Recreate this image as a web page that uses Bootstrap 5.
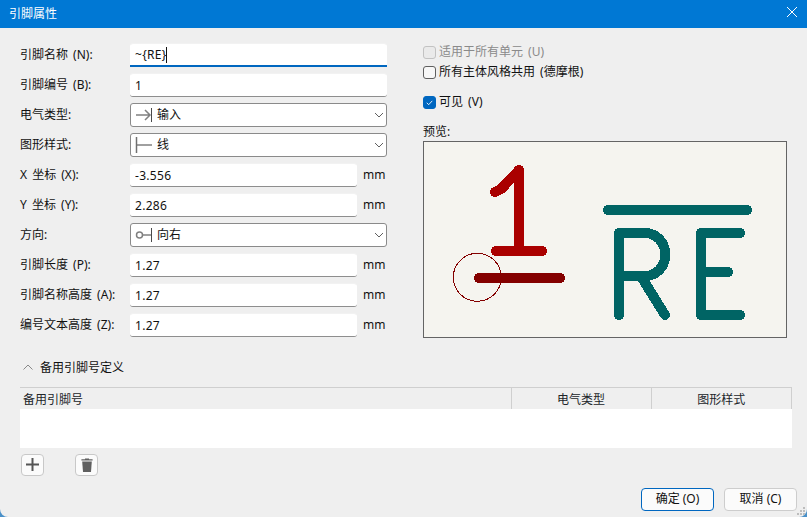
<!DOCTYPE html>
<html lang="zh-CN">
<head>
  <meta charset="UTF-8" />
  <meta name="viewport" content="width=device-width, initial-scale=1" />
  <title>引脚属性</title>
  <link href="https://cdn.jsdelivr.net/npm/bootstrap@5.3.2/dist/css/bootstrap.min.css" rel="stylesheet" />
  <style>
    html, body {
      height: 100%;
      background-color: #4a90c8;
      overflow: hidden;
    }
    body {
      font-family: "Noto Sans", "Noto Sans CJK SC", sans-serif;
      font-size: 12px;
      line-height: 18px;
      word-spacing: 2px;
      color: #111;
    }
    /* Window */
    #dlg {
      position: relative;
      width: 807px;
      height: 517px;
      background-color: #efefef;
      border-radius: 0 0 8px 8px;
      overflow: hidden;
    }
    #titlebar {
      height: 28px;
      padding: 5px 10px 5px 9px;
      background-color: #0078d4;
      color: #fff;
    }
    #closer { width: 10px; height: 10px; margin-top: 2px; }

    /* Top form */
    #formarea { padding: 15px 20px 0; gap: 36px; }
    #leftcol { width: 367px; gap: 6px; }
    #rightcol { width: 364px; }
    .pin-row { height: 24px; }
    .pin-label { width: 110px; flex-shrink: 0; }
    .pin-input.form-control {
      height: 24px;
      min-height: 0;
      padding: 0 4px 0 5px;
      font-size: 12px;
      line-height: 18px;
      letter-spacing: .3px;
      color: #111;
      background-color: #fff;
      border: 0;
      border-top: 1px solid #f2f2f2;
      border-bottom: 1px solid #8e8e8e;
      border-radius: 3px;
      box-shadow: none;
    }
    .pin-input.is-current { border-bottom: 2px solid #0067c0; border-radius: 3px 3px 0 0; }
    .pin-caret {
      position: absolute;
      left: 36px;
      top: 4px;
      width: 1px;
      height: 16px;
      background-color: #111;
    }
    .pin-unit { width: 30px; padding-left: 6px; flex-shrink: 0; }
    .pin-select {
      height: 24px;
      padding: 0 2px 0 4px;
      gap: 2px;
      background-color: #fff;
      border: 1px solid #8a8a8a;
      border-radius: 3px;
    }
    .pin-select svg { flex-shrink: 0; }

    /* Checks */
    .chk-row { height: 18px; gap: 3px; margin-bottom: 2px; }
    .chk-row.chk-gap { margin-top: 12px; margin-bottom: 12px; }
    .chk-row .form-check-input {
      width: 13px;
      height: 13px;
      margin: 0;
      flex-shrink: 0;
      background-color: #f7f7f7;
      border: 1px solid #5f5f5f;
      border-radius: 3px;
      opacity: 1;
    }
    .chk-row .form-check-input:checked {
      background-color: #0067c0;
      border-color: #0067c0;
      background-image: url("data:image/svg+xml,%3csvg xmlns='http://www.w3.org/2000/svg' viewBox='0 0 20 20'%3e%3cpath fill='none' stroke='%23fff' stroke-width='1.6' d='m5 10.5 3.5 3.5 6.5-7'/%3e%3c/svg%3e");
    }
    .chk-row .form-check-input:disabled { background-color: #eaeaea; border-color: #c2c2c2; }
    .chk-off { color: #8a8a8a; }

    #previewbox {
      height: 197px;
      background-color: #f5f4ef;
      border: 1px solid #646464;
    }
    #previewbox svg { display: block; shape-rendering: crispEdges; }

    /* Alternate pins */
    #altarea { padding: 20px 15px 0 20px; }
    #alttoggle { height: 20px; margin-bottom: 9px; padding-left: 3px; gap: 7px; }
    #alttoggle svg { margin-bottom: 2px; }
    #alttable { width: 772px; margin: 0; table-layout: fixed; border-collapse: collapse; }
    #alttable th {
      height: 21px;
      padding: 1px 3px 0;
      font-weight: 400;
      line-height: 18px;
      background-color: #efefef;
      border-top: 1px solid #cfcfcf;
      border-left: 1px solid #cfcfcf;
      border-bottom: 0;
      text-align: center;
    }
    #alttable th:first-child { border-left: 0; text-align: left; }
    #alttable th:last-child { border-right: 1px solid #cfcfcf; }
    #alttable td { height: 39px; padding: 0; background-color: #fff; border: 0; }
    .col-a { width: 491px; }
    .col-b { width: 140px; }

    #alttools { margin: 6px 0 0 1px; gap: 31px; }
    .tool-btn.btn {
      width: 23px;
      height: 22px;
      padding: 0;
      background-color: #fbfbfb;
      border: 1px solid #c8c8c8;
      border-radius: 4px;
    }

    /* Footer */
    #footerbar { margin-top: 12px; padding-right: 10px; gap: 10px; }
    .foot-btn.btn {
      width: 73px;
      height: 23px;
      padding: 0;
      font-size: 12px;
      line-height: 20px;
      color: #111;
      background-color: #fbfbfb;
      border: 1px solid #cdcdcd;
      border-radius: 4px;
    }
    .foot-btn.is-default { border-color: #0067c0; }
    #grip { position: absolute; right: 2px; bottom: 2px; }
  </style>
</head>
<body>
  <div id="dlg">

    <div id="titlebar" class="d-flex justify-content-between align-items-start">
      <span>引脚属性</span>
      <svg id="closer" viewBox="0 0 10 10"><path d="M0 0L10 10M10 0L0 10" stroke="#fff" stroke-width="1" fill="none"/></svg>
    </div>

    <div id="formarea" class="d-flex">
      <div id="leftcol" class="d-flex flex-column">
        <div class="pin-row d-flex align-items-center">
          <span class="pin-label">引脚名称 (N):</span>
          <div class="position-relative flex-grow-1">
            <input class="form-control pin-input is-current" type="text" value="~{RE}" />
            <span class="pin-caret"></span>
          </div>
        </div>
        <div class="pin-row d-flex align-items-center">
          <span class="pin-label">引脚编号 (B):</span>
          <input class="form-control pin-input" type="text" value="1" />
        </div>
        <div class="pin-row d-flex align-items-center">
          <span class="pin-label">电气类型:</span>
          <div class="pin-select flex-grow-1 d-flex align-items-center">
            <svg width="20" height="16" viewBox="0 0 20 16"><path d="M1 8H15M10 3L15 8L10 13" stroke="#808080" stroke-width="1.5" fill="none"/><path d="M16.5 1V15" stroke="#4a4a4a" stroke-width="1"/></svg>
            <span class="flex-grow-1">输入</span>
            <svg width="10" height="6" viewBox="0 0 10 6"><path d="M1 1L5 5L9 1" stroke="#606060" fill="none"/></svg>
          </div>
        </div>
        <div class="pin-row d-flex align-items-center">
          <span class="pin-label">图形样式:</span>
          <div class="pin-select flex-grow-1 d-flex align-items-center">
            <svg width="20" height="16" viewBox="0 0 20 16"><path d="M1.5 8H17" stroke="#808080" stroke-width="1.5" fill="none"/><path d="M1.5 0V16" stroke="#707070" stroke-width="1.5"/></svg>
            <span class="flex-grow-1">线</span>
            <svg width="10" height="6" viewBox="0 0 10 6"><path d="M1 1L5 5L9 1" stroke="#606060" fill="none"/></svg>
          </div>
        </div>
        <div class="pin-row d-flex align-items-center">
          <span class="pin-label">X 坐标 (X):</span>
          <input class="form-control pin-input" type="text" value="-3.556" />
          <span class="pin-unit">mm</span>
        </div>
        <div class="pin-row d-flex align-items-center">
          <span class="pin-label">Y 坐标 (Y):</span>
          <input class="form-control pin-input" type="text" value="2.286" />
          <span class="pin-unit">mm</span>
        </div>
        <div class="pin-row d-flex align-items-center">
          <span class="pin-label">方向:</span>
          <div class="pin-select flex-grow-1 d-flex align-items-center">
            <svg width="20" height="16" viewBox="0 0 20 16"><circle cx="4.5" cy="8" r="3" stroke="#808080" stroke-width="1.5" fill="none"/><path d="M7.5 8H16" stroke="#808080" stroke-width="1.5"/><path d="M16.5 1V15" stroke="#4a4a4a" stroke-width="1"/></svg>
            <span class="flex-grow-1">向右</span>
            <svg width="10" height="6" viewBox="0 0 10 6"><path d="M1 1L5 5L9 1" stroke="#606060" fill="none"/></svg>
          </div>
        </div>
        <div class="pin-row d-flex align-items-center">
          <span class="pin-label">引脚长度 (P):</span>
          <input class="form-control pin-input" type="text" value="1.27" />
          <span class="pin-unit">mm</span>
        </div>
        <div class="pin-row d-flex align-items-center">
          <span class="pin-label">引脚名称高度 (A):</span>
          <input class="form-control pin-input" type="text" value="1.27" />
          <span class="pin-unit">mm</span>
        </div>
        <div class="pin-row d-flex align-items-center">
          <span class="pin-label">编号文本高度 (Z):</span>
          <input class="form-control pin-input" type="text" value="1.27" />
          <span class="pin-unit">mm</span>
        </div>
      </div>

      <div id="rightcol">
        <label class="chk-row d-flex align-items-center chk-off">
          <input class="form-check-input" type="checkbox" disabled />
          <span>适用于所有单元 (U)</span>
        </label>
        <label class="chk-row d-flex align-items-center">
          <input class="form-check-input" type="checkbox" />
          <span>所有主体风格共用 (德摩根)</span>
        </label>
        <label class="chk-row chk-gap d-flex align-items-center">
          <input class="form-check-input" type="checkbox" checked />
          <span>可见 (V)</span>
        </label>
        <div>预览:</div>
        <div id="previewbox">
          <svg width="362" height="195" viewBox="424 142 362 195" fill="none" stroke-linecap="round" stroke-linejoin="round">
            <g stroke="#aa0000" stroke-width="10">
              <path d="M495 192L501 189L505 185L519 170V251"/>
              <path d="M496 251H542"/>
            </g>
            <path d="M479 278H560" stroke="#840000" stroke-width="10"/>
            <circle cx="477.3" cy="277.3" r="24" stroke="#840000" stroke-width="1"/>
            <g stroke="#006464" stroke-width="10">
              <path d="M608 210H747"/>
              <path d="M619 315V233H645C656 233 665 242 665 253V256C665 267 656 276 645 276H619"/>
              <path d="M642 278L665 315"/>
              <path d="M740 233H701V315H740"/>
              <path d="M701 272H728"/>
            </g>
          </svg>
        </div>
      </div>
    </div>

    <div id="altarea">
      <div id="alttoggle" class="d-flex align-items-center">
        <svg width="10" height="6" viewBox="0 0 10 6"><path d="M0.5 5.5L5 1L9.5 5.5" stroke="#888" fill="none"/></svg>
        <span>备用引脚号定义</span>
      </div>
      <table id="alttable" class="table">
        <colgroup><col class="col-a" /><col class="col-b" /><col /></colgroup>
        <thead>
          <tr><th>备用引脚号</th><th>电气类型</th><th>图形样式</th></tr>
        </thead>
        <tbody>
          <tr><td colspan="3"></td></tr>
        </tbody>
      </table>
      <div id="alttools" class="d-flex">
        <button class="btn tool-btn d-flex align-items-center justify-content-center" type="button" aria-label="添加">
          <svg width="13" height="13" viewBox="0 0 13 13"><path d="M6.5 0V13M0 6.5H13" stroke="#555" stroke-width="2"/></svg>
        </button>
        <button class="btn tool-btn d-flex align-items-center justify-content-center" type="button" aria-label="删除">
          <svg width="12" height="14" viewBox="0 0 12 14"><path d="M4 1.2V0.4H8V1.2H11.6V2.6H0.4V1.2Z" fill="#5f5f5f"/><path d="M1.2 3.6H10.8L10 14H2Z" fill="#5f5f5f"/></svg>
        </button>
      </div>
    </div>

    <div id="footerbar" class="d-flex justify-content-end">
      <button class="btn foot-btn is-default" type="button">确定 (O)</button>
      <button class="btn foot-btn" type="button">取消 (C)</button>
    </div>

    <svg id="grip" width="8" height="8" viewBox="0 0 8 8" fill="#bdbdbd">
      <rect x="6" y="0" width="2" height="2"/><rect x="3" y="3" width="2" height="2"/><rect x="6" y="3" width="2" height="2"/>
      <rect x="0" y="6" width="2" height="2"/><rect x="3" y="6" width="2" height="2"/><rect x="6" y="6" width="2" height="2"/>
    </svg>
  </div>

  <script src="https://cdn.jsdelivr.net/npm/bootstrap@5.3.2/dist/js/bootstrap.bundle.min.js"></script>
</body>
</html>
